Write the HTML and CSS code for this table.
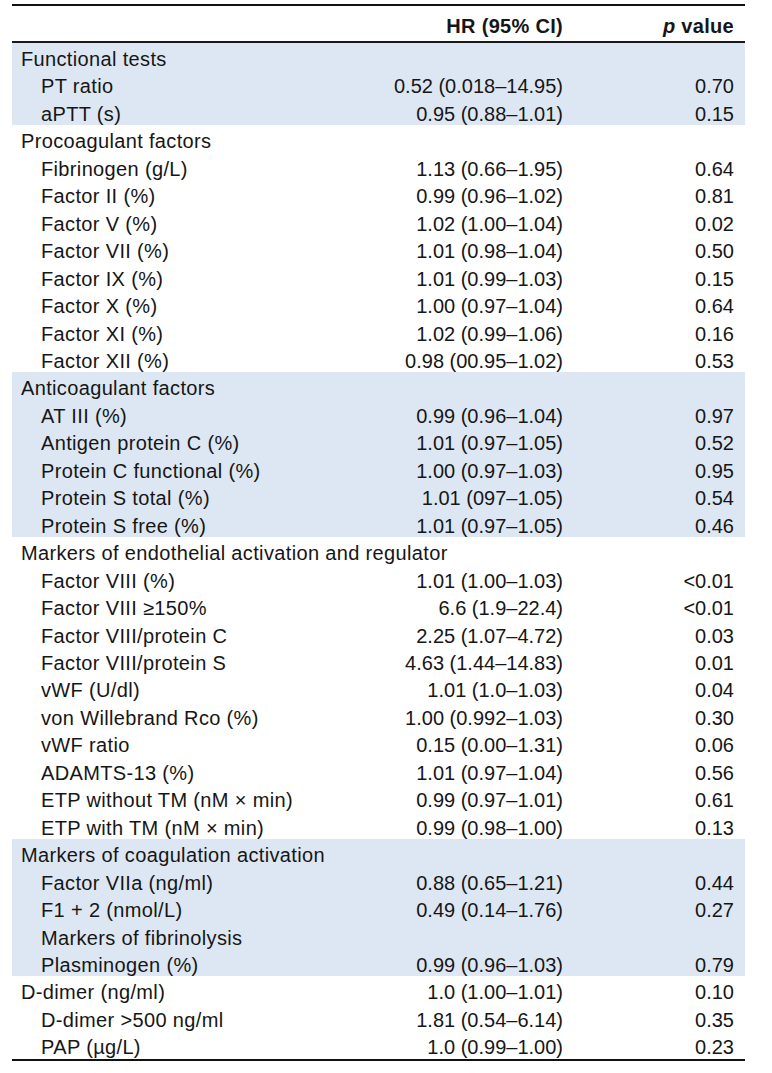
FILE: index.html
```html
<!DOCTYPE html>
<html lang="en">
<head>
<meta charset="utf-8">
<title>Hazard ratios</title>
<link rel="stylesheet" href="styles.css">
</head>
<body>
<div class="table">
  <div class="head">
    <div class="c1"></div>
    <div class="c2">HR (95% CI)</div>
    <div class="c3"><i>p</i> value</div>
  </div>

  <div class="group shaded">
    <div class="row cat"><div class="c1">Functional tests</div></div>
    <div class="row"><div class="c1">PT ratio</div><div class="c2">0.52 (0.018–14.95)</div><div class="c3">0.70</div></div>
    <div class="row"><div class="c1">aPTT (s)</div><div class="c2">0.95 (0.88–1.01)</div><div class="c3">0.15</div></div>
  </div>

  <div class="group">
    <div class="row cat"><div class="c1">Procoagulant factors</div></div>
    <div class="row"><div class="c1">Fibrinogen (g/L)</div><div class="c2">1.13 (0.66–1.95)</div><div class="c3">0.64</div></div>
    <div class="row"><div class="c1">Factor II (%)</div><div class="c2">0.99 (0.96–1.02)</div><div class="c3">0.81</div></div>
    <div class="row"><div class="c1">Factor V (%)</div><div class="c2">1.02 (1.00–1.04)</div><div class="c3">0.02</div></div>
    <div class="row"><div class="c1">Factor VII (%)</div><div class="c2">1.01 (0.98–1.04)</div><div class="c3">0.50</div></div>
    <div class="row"><div class="c1">Factor IX (%)</div><div class="c2">1.01 (0.99–1.03)</div><div class="c3">0.15</div></div>
    <div class="row"><div class="c1">Factor X (%)</div><div class="c2">1.00 (0.97–1.04)</div><div class="c3">0.64</div></div>
    <div class="row"><div class="c1">Factor XI (%)</div><div class="c2">1.02 (0.99–1.06)</div><div class="c3">0.16</div></div>
    <div class="row"><div class="c1">Factor XII (%)</div><div class="c2">0.98 (00.95–1.02)</div><div class="c3">0.53</div></div>
  </div>

  <div class="group shaded">
    <div class="row cat"><div class="c1">Anticoagulant factors</div></div>
    <div class="row"><div class="c1">AT III (%)</div><div class="c2">0.99 (0.96–1.04)</div><div class="c3">0.97</div></div>
    <div class="row"><div class="c1">Antigen protein C (%)</div><div class="c2">1.01 (0.97–1.05)</div><div class="c3">0.52</div></div>
    <div class="row"><div class="c1">Protein C functional (%)</div><div class="c2">1.00 (0.97–1.03)</div><div class="c3">0.95</div></div>
    <div class="row"><div class="c1">Protein S total (%)</div><div class="c2">1.01 (097–1.05)</div><div class="c3">0.54</div></div>
    <div class="row"><div class="c1">Protein S free (%)</div><div class="c2">1.01 (0.97–1.05)</div><div class="c3">0.46</div></div>
  </div>

  <div class="group">
    <div class="row cat"><div class="c1">Markers of endothelial activation and regulator</div></div>
    <div class="row"><div class="c1">Factor VIII (%)</div><div class="c2">1.01 (1.00–1.03)</div><div class="c3">&lt;0.01</div></div>
    <div class="row"><div class="c1">Factor VIII ≥150%</div><div class="c2">6.6 (1.9–22.4)</div><div class="c3">&lt;0.01</div></div>
    <div class="row"><div class="c1">Factor VIII/protein C</div><div class="c2">2.25 (1.07–4.72)</div><div class="c3">0.03</div></div>
    <div class="row"><div class="c1">Factor VIII/protein S</div><div class="c2">4.63 (1.44–14.83)</div><div class="c3">0.01</div></div>
    <div class="row"><div class="c1">vWF (U/dl)</div><div class="c2">1.01 (1.0–1.03)</div><div class="c3">0.04</div></div>
    <div class="row"><div class="c1">von Willebrand Rco (%)</div><div class="c2">1.00 (0.992–1.03)</div><div class="c3">0.30</div></div>
    <div class="row"><div class="c1">vWF ratio</div><div class="c2">0.15 (0.00–1.31)</div><div class="c3">0.06</div></div>
    <div class="row"><div class="c1">ADAMTS-13 (%)</div><div class="c2">1.01 (0.97–1.04)</div><div class="c3">0.56</div></div>
    <div class="row"><div class="c1">ETP without TM (nM × min)</div><div class="c2">0.99 (0.97–1.01)</div><div class="c3">0.61</div></div>
    <div class="row"><div class="c1">ETP with TM (nM × min)</div><div class="c2">0.99 (0.98–1.00)</div><div class="c3">0.13</div></div>
  </div>

  <div class="group shaded">
    <div class="row cat"><div class="c1">Markers of coagulation activation</div></div>
    <div class="row"><div class="c1">Factor VIIa (ng/ml)</div><div class="c2">0.88 (0.65–1.21)</div><div class="c3">0.44</div></div>
    <div class="row"><div class="c1">F1 + 2 (nmol/L)</div><div class="c2">0.49 (0.14–1.76)</div><div class="c3">0.27</div></div>
    <div class="row"><div class="c1">Markers of fibrinolysis</div></div>
    <div class="row"><div class="c1">Plasminogen (%)</div><div class="c2">0.99 (0.96–1.03)</div><div class="c3">0.79</div></div>
  </div>

  <div class="group last">
    <div class="row cat"><div class="c1">D-dimer (ng/ml)</div><div class="c2">1.0 (1.00–1.01)</div><div class="c3">0.10</div></div>
    <div class="row"><div class="c1">D-dimer &gt;500 ng/ml</div><div class="c2">1.81 (0.54–6.14)</div><div class="c3">0.35</div></div>
    <div class="row"><div class="c1">PAP (µg/L)</div><div class="c2">1.0 (0.99–1.00)</div><div class="c3">0.23</div></div>
  </div>
</div>
</body>
</html>
```

FILE: styles.css
```css
html, body {
  margin: 0;
  padding: 0;
  background: #ffffff;
}

body {
  padding: 4px 0 0 12px;
  font-family: "Liberation Sans", Arial, Helvetica, sans-serif;
  font-size: 20px;
  color: #161616;
}

.table {
  width: 733px;
  border-top: 2px solid #111;
  border-bottom: 2px solid #111;
}

.head {
  display: grid;
  grid-template-columns: 1fr 220px 171px;
  padding: 0 11px 0 9px;
  height: 37px;
  box-sizing: border-box;
  padding-top: 9px;
  line-height: 23px;
  font-weight: bold;
  letter-spacing: 0.3px;
  border-bottom: 2px solid #1a1a1a;
}

.head i {
  font-style: italic;
}

.c2, .c3 {
  text-align: right;
  white-space: nowrap;
}

.c1 {
  white-space: nowrap;
  letter-spacing: 0.35px;
}

.shaded {
  background: #dde7f3;
}

.row {
  display: grid;
  grid-template-columns: 1fr 220px 171px;
  height: 27.46px;
  box-sizing: border-box;
  padding: 5px 11px 0 29px;
  line-height: 22.46px;
}

.row.cat {
  padding-left: 9px;
}

.row.cat .c1:only-child {
  grid-column: 1 / -1;
}
```
